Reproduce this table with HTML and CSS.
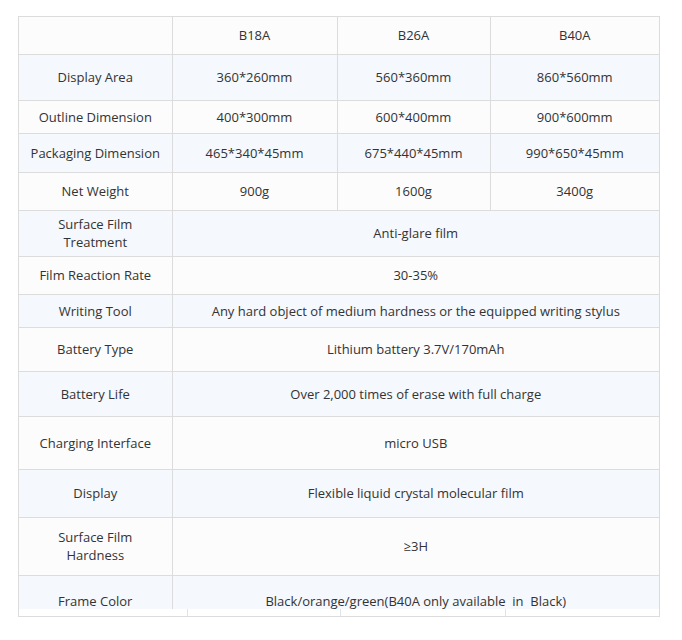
FILE: index.html
```html
<!DOCTYPE html>
<html>
<head>
<meta charset="utf-8">
<link rel="stylesheet" href="styles.css">
</head>
<body>
<div class="wrap">
  <div class="clip">
    <table class="spec">
      <colgroup>
        <col class="c1"><col class="c2"><col class="c3"><col class="c4">
      </colgroup>
      <tr class="head h37"><td></td><td>B18A</td><td>B26A</td><td>B40A</td></tr>
      <tr class="odd h46"><td>Display Area</td><td>360*260mm</td><td>560*360mm</td><td>860*560mm</td></tr>
      <tr class="even h33"><td>Outline Dimension</td><td>400*300mm</td><td>600*400mm</td><td>900*600mm</td></tr>
      <tr class="odd h39"><td>Packaging Dimension</td><td>465*340*45mm</td><td>675*440*45mm</td><td>990*650*45mm</td></tr>
      <tr class="even h38"><td>Net Weight</td><td>900g</td><td>1600g</td><td>3400g</td></tr>
      <tr class="odd h46"><td>Surface Film<br>Treatment</td><td colspan="3">Anti-glare film</td></tr>
      <tr class="even h38"><td>Film Reaction Rate</td><td colspan="3">30-35%</td></tr>
      <tr class="odd h33"><td>Writing Tool</td><td colspan="3">Any hard object of medium hardness or the equipped writing stylus</td></tr>
      <tr class="even h44"><td>Battery Type</td><td colspan="3">Lithium battery 3.7V/170mAh</td></tr>
      <tr class="odd h45"><td>Battery Life</td><td colspan="3">Over 2,000 times of erase with full charge</td></tr>
      <tr class="even h53"><td>Charging Interface</td><td colspan="3">micro USB</td></tr>
      <tr class="odd h48"><td>Display</td><td colspan="3">Flexible liquid crystal molecular film</td></tr>
      <tr class="even h58"><td>Surface Film<br>Hardness</td><td colspan="3">≥3H</td></tr>
      <tr class="odd last"><td>Frame Color</td><td colspan="3">Black/orange/green(B40A only available&nbsp; in&nbsp; Black)</td></tr>
    </table>
  </div>
  <div class="strip">
    <span class="tick t1"></span>
    <span class="tick t2"></span>
    <span class="tick t3"></span>
  </div>
</div>
</body>
</html>
```

FILE: styles.css
```css
html, body {
  margin: 0;
  padding: 0;
  background: #ffffff;
}
body {
  padding: 16px 0 0 18px;
  font-family: "Open Sans", "Noto Sans", "Liberation Sans", sans-serif;
  font-size: 13px;
  color: #333333;
}
.wrap {
  width: 642px;
  box-sizing: border-box;
  border: 1px solid #dcdcdc;
}
.clip {
  height: 592px;
  overflow: hidden;
}
.spec {
  width: 640px;
  table-layout: fixed;
  border-collapse: collapse;
  border-style: hidden;
}
.c1 { width: 153px; }
.c2 { width: 165px; }
.c3 { width: 153px; }
.c4 { width: 169px; }
.spec td {
  border: 1px solid #dcdcdc;
  text-align: center;
  vertical-align: middle;
  padding: 0 4px;
  line-height: 18px;
}
.head td { background: #fcfcfc; }
.odd td { background: #f5f8fc; }
.even td { background: #fcfcfd; }
.h33 { height: 33px; }
.h37 { height: 37px; }
.h38 { height: 38px; }
.h39 { height: 39px; }
.h44 { height: 44px; }
.h45 { height: 45px; }
.h46 { height: 46px; }
.h48 { height: 48px; }
.h53 { height: 53px; }
.h58 { height: 58px; }
.last td {
  height: 33px;
  vertical-align: bottom;
  line-height: 16px;
  padding-bottom: 0;
}
.strip {
  height: 7px;
  position: relative;
}
.tick {
  position: absolute;
  top: 0;
  width: 1px;
  height: 7px;
  background: #e3e3e3;
}
.t1 { left: 168px; }
.t2 { left: 321px; }
.t3 { left: 486px; }
```
